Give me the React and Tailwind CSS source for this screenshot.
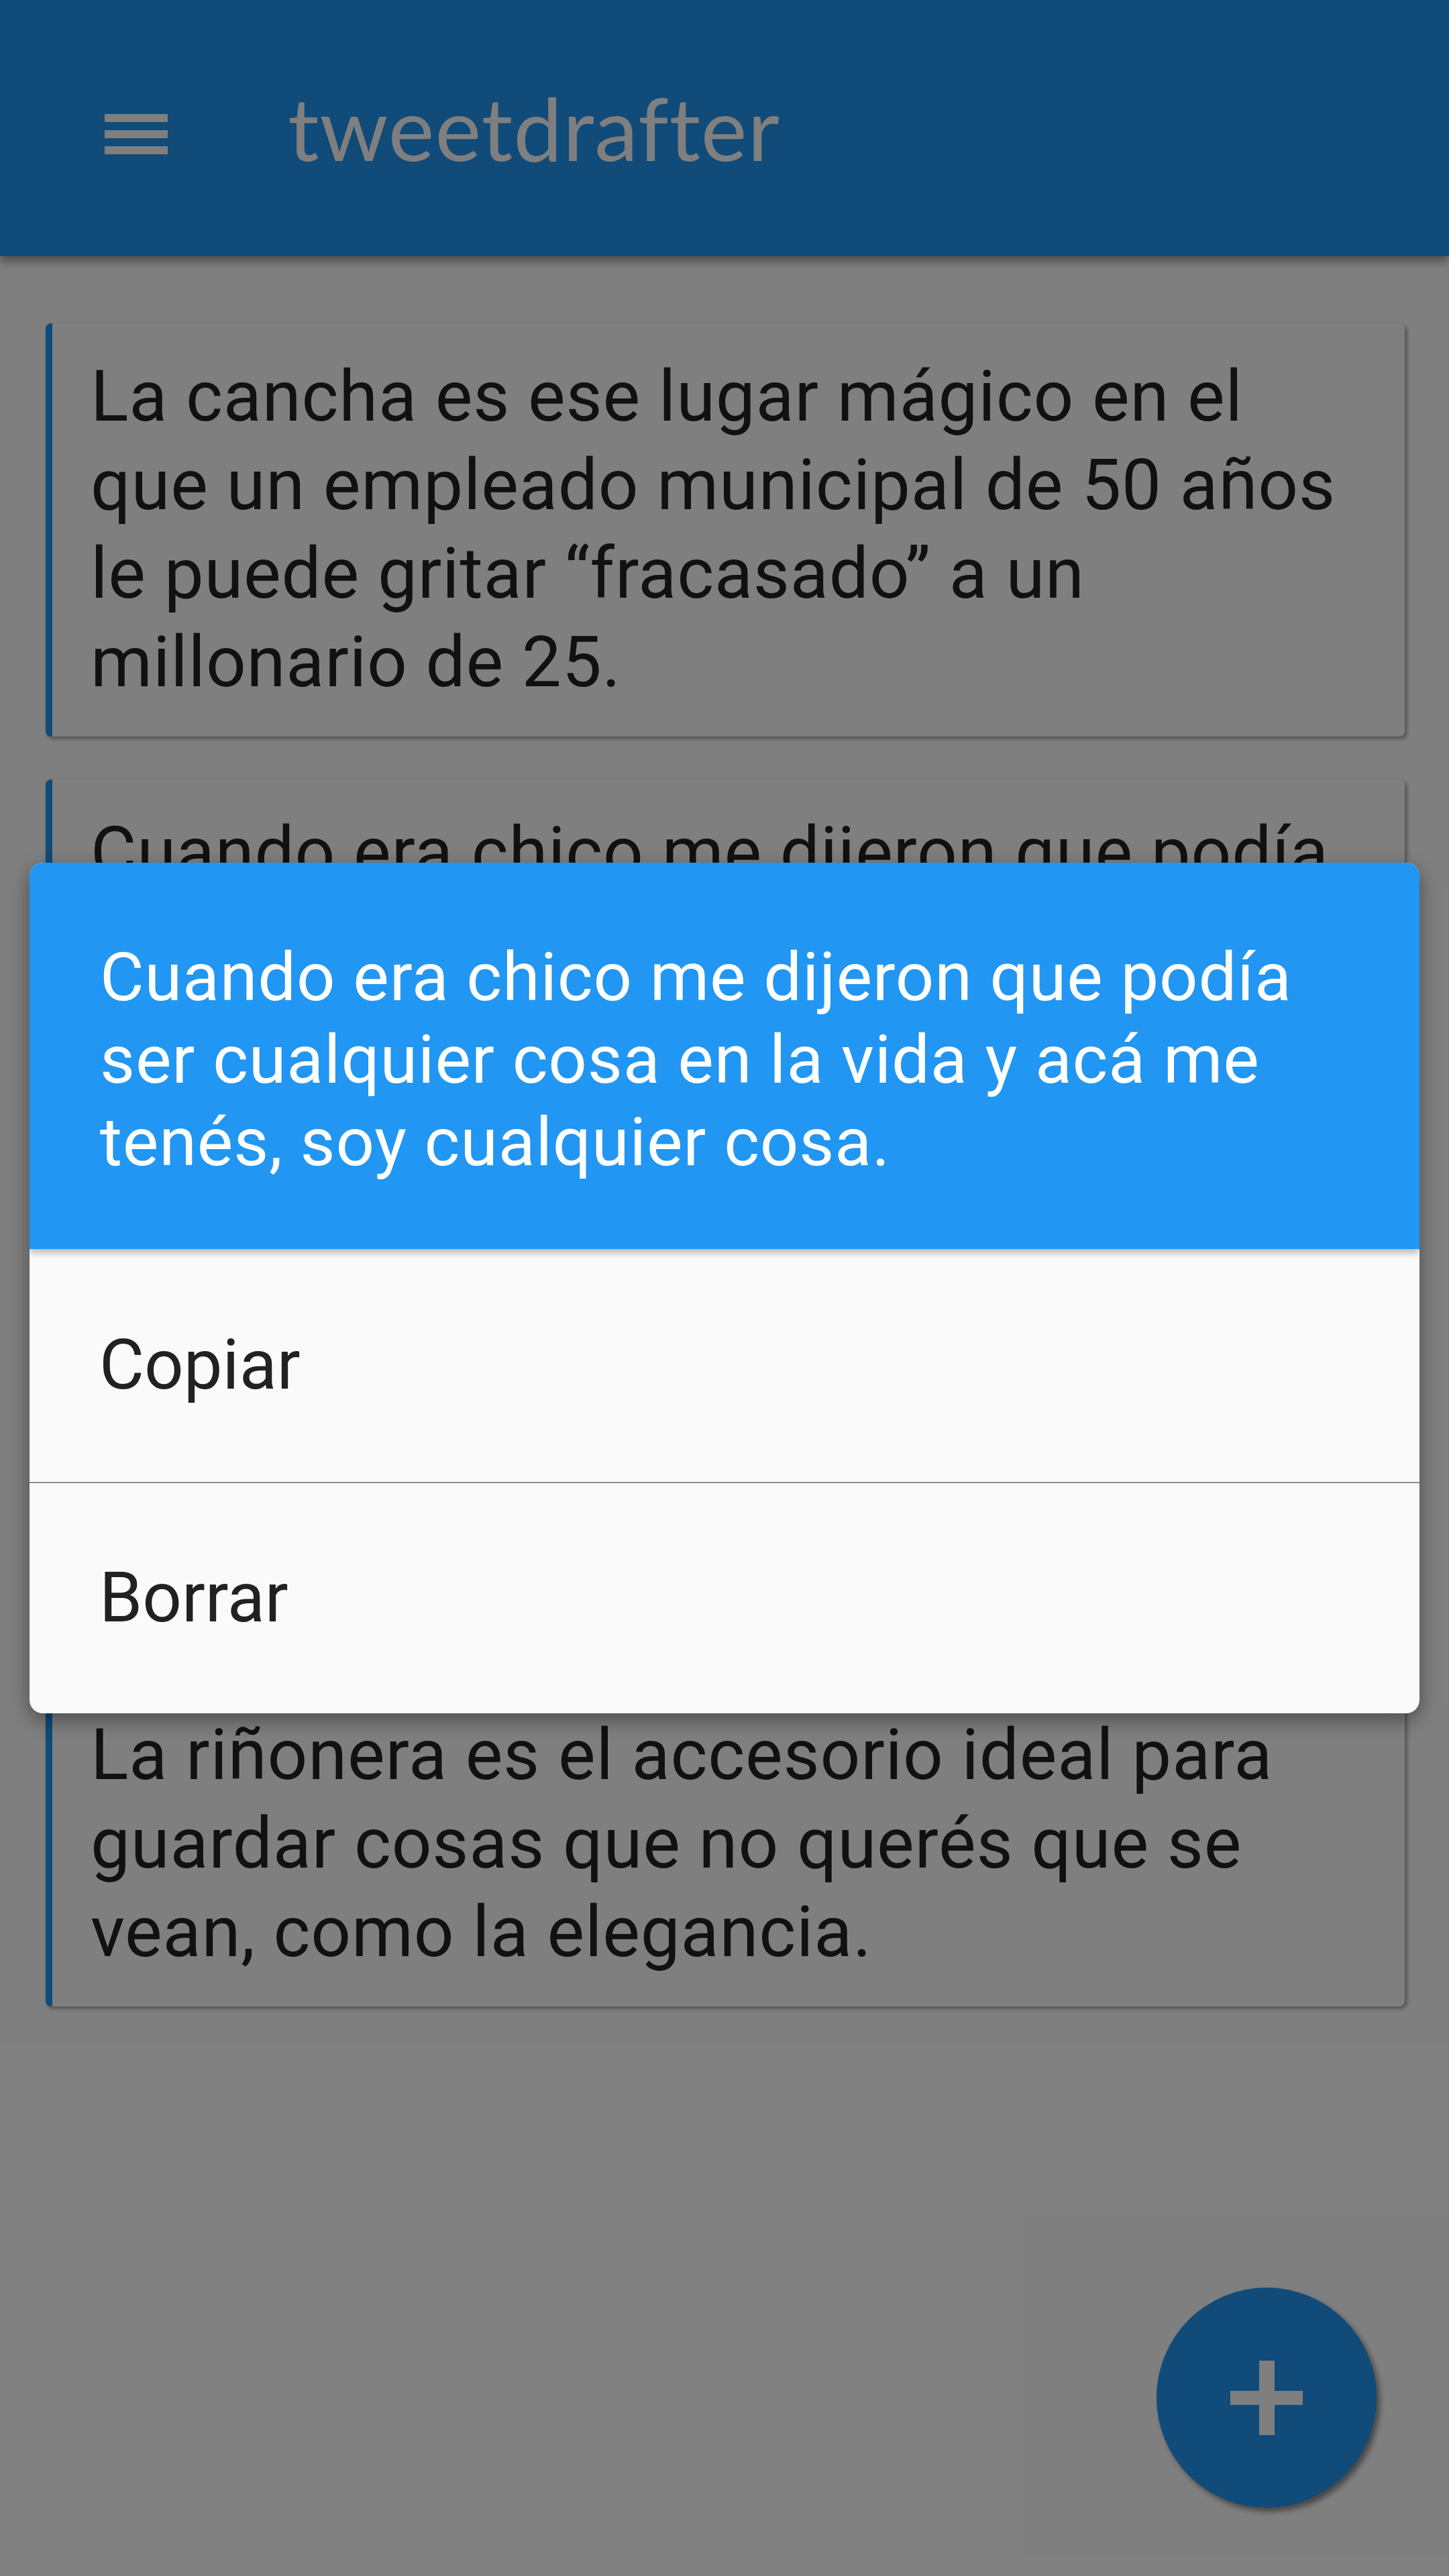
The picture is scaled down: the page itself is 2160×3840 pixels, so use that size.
export default function App() {
  const cards = [
    ["La cancha es ese lugar mágico en el", "que un empleado municipal de 50 años", "le puede gritar “fracasado” a un", "millonario de 25."],
    ["Cuando era chico me dijeron que podía", "ser cualquier cosa en la vida y acá me", "tenés, soy cualquier cosa."],
    ["Mi viejo siempre decía que el que", "madruga tiene sueño todo el día,", "y la verdad es que tenía razón.", "Nunca fallaba."],
    ["La riñonera es el accesorio ideal para", "guardar cosas que no querés que se", "vean, como la elegancia."],
  ];

  return (
    <div className="relative w-[2160px] h-[3840px] overflow-hidden bg-white font-['Roboto',sans-serif]">
      {/* app bar */}
      <div className="relative z-10 h-[382px] bg-[#2196F3] shadow-[0_8px_14px_rgba(0,0,0,0.4)] flex items-center pl-[156px] pt-[18px]">
        <svg width="94" height="60" viewBox="0 0 94 60" fill="#fff">
          <rect x="0" y="0" width="94" height="12" />
          <rect x="0" y="24" width="94" height="12" />
          <rect x="0" y="48" width="94" height="12" />
        </svg>
        <span className="ml-[179px] -mt-[20px] text-white font-['Lato',sans-serif] text-[130px] leading-none tracking-[1px]">
          tweetdrafter
        </span>
      </div>

      {/* drafts */}
      <div className="flex flex-col gap-[64px] pt-[100px] pl-[68px] pr-[66px]">
        {cards.map((lines, i) => (
          <div
            key={i}
            className={
              "rounded-[8px] border-l-[10px] border-[#2196F3] bg-white shadow-[3px_3px_6px_rgba(0,0,0,0.4)] pl-[57px] pr-[30px] text-[105px] leading-[132px] tracking-[0.8px] text-[#222] " +
              (i === 2 ? "h-[733px] py-[40px]" : "py-[44px]")
            }
          >
            {lines.map((l, j) => (
              <div key={j} className="whitespace-nowrap">{l}</div>
            ))}
          </div>
        ))}
      </div>

      {/* fab */}
      <div className="absolute right-[108px] bottom-[102px] w-[328px] h-[328px] rounded-full bg-[#2196F3] shadow-[5px_6px_8px_rgba(0,0,0,0.45)] flex items-center justify-center">
        <svg width="108" height="111" viewBox="0 0 108 111" fill="#fff">
          <rect x="0" y="45" width="108" height="21" />
          <rect x="43" y="0" width="23" height="111" />
        </svg>
      </div>

      {/* scrim + dialog */}
      <div className="absolute inset-0 z-20 bg-black/50 flex items-center justify-center">
        <div className="w-[2072px] rounded-[20px] overflow-hidden bg-[#fafafa] shadow-[0_10px_30px_rgba(0,0,0,0.4)]">
          <div className="relative z-10 bg-[#2196F3] px-[105px] pt-[109px] pb-[98px] text-white text-[101px] leading-[123px] tracking-[0.8px] shadow-[0_6px_10px_rgba(0,0,0,0.25)]">
            <div className="whitespace-nowrap">Cuando era chico me dijeron que podía</div>
            <div className="whitespace-nowrap">ser cualquier cosa en la vida y acá me</div>
            <div className="whitespace-nowrap">tenés, soy cualquier cosa.</div>
          </div>
          <div className="h-[347px] flex items-center px-[104px] text-[103px] text-[#212121]">Copiar</div>
          <div className="h-[2px] bg-[#8c8c8c]" />
          <div className="h-[343px] flex items-center px-[104px] text-[103px] text-[#212121]">Borrar</div>
        </div>
      </div>
    </div>
  );
}
